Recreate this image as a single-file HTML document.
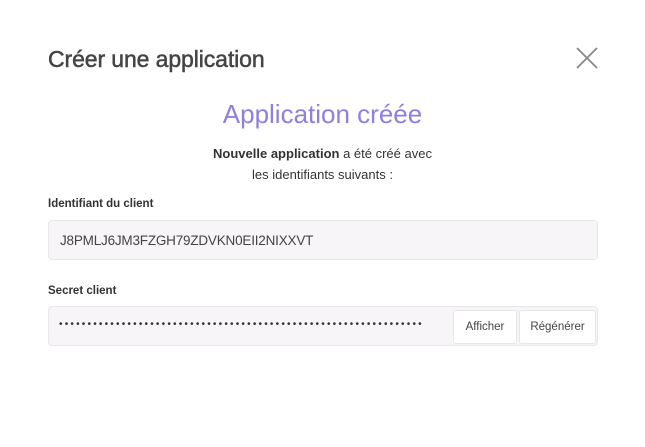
<!DOCTYPE html>
<html><head><meta charset="utf-8"><style>
*{margin:0;padding:0;box-sizing:border-box}
body{width:645px;height:447px;background:#fff;font-family:"Liberation Sans",sans-serif;position:relative;overflow:hidden;color:#333}
.t{position:absolute;left:48px;top:46px;font-size:23px;color:#444;white-space:nowrap;-webkit-text-stroke:0.5px #444;letter-spacing:-0.1px}
.x{position:absolute;left:575px;top:46px}
.h{position:absolute;left:0;width:645px;top:99px;text-align:center;font-size:26px;color:#8c80e2}
.p{position:absolute;left:0;width:645px;top:143px;text-align:center;font-size:13px;line-height:21px;color:#333}
.l{position:absolute;left:48px;font-size:11.5px;font-weight:bold;color:#333}
.in{position:absolute;left:48px;width:550px;background:#f7f5f8;border:1px solid #e9e7eb;border-radius:4px}
.v{position:absolute;left:11px;top:12px;font-size:13.5px;color:#444;letter-spacing:-0.2px}
.d{position:absolute;left:10px;top:12px;font-size:10px;letter-spacing:2.2px;color:#333;white-space:nowrap}
.b{position:absolute;top:3px;height:34px;background:#fff;border:1px solid #e6e6e6;border-radius:3px;font-size:11.5px;color:#444;text-align:center;line-height:32px}
</style></head><body>
<div class="t">Créer une application</div>
<svg class="x" width="24" height="24" viewBox="0 0 24 24"><path d="M2 2L22 22M22 2L2 22" stroke="#888" stroke-width="1.8"/></svg>
<div class="h">Application créée</div>
<div class="p"><b>Nouvelle application</b> a été créé avec<br>les identifiants suivants :</div>
<div class="l" style="top:198px">Identifiant du client</div>
<div class="in" style="top:220px;height:40px"><div class="v">J8PMLJ6JM3FZGH79ZDVKN0EII2NIXXVT</div></div>
<div class="l" style="top:285px">Secret client</div>
<div class="in" style="top:306px;height:40px"><div class="d">••••••••••••••••••••••••••••••••••••••••••••••••••••••••••••••••</div>
<div class="b" style="left:404px;width:64px">Afficher</div>
<div class="b" style="left:470px;width:77px">Régénérer</div></div>
</body></html>
